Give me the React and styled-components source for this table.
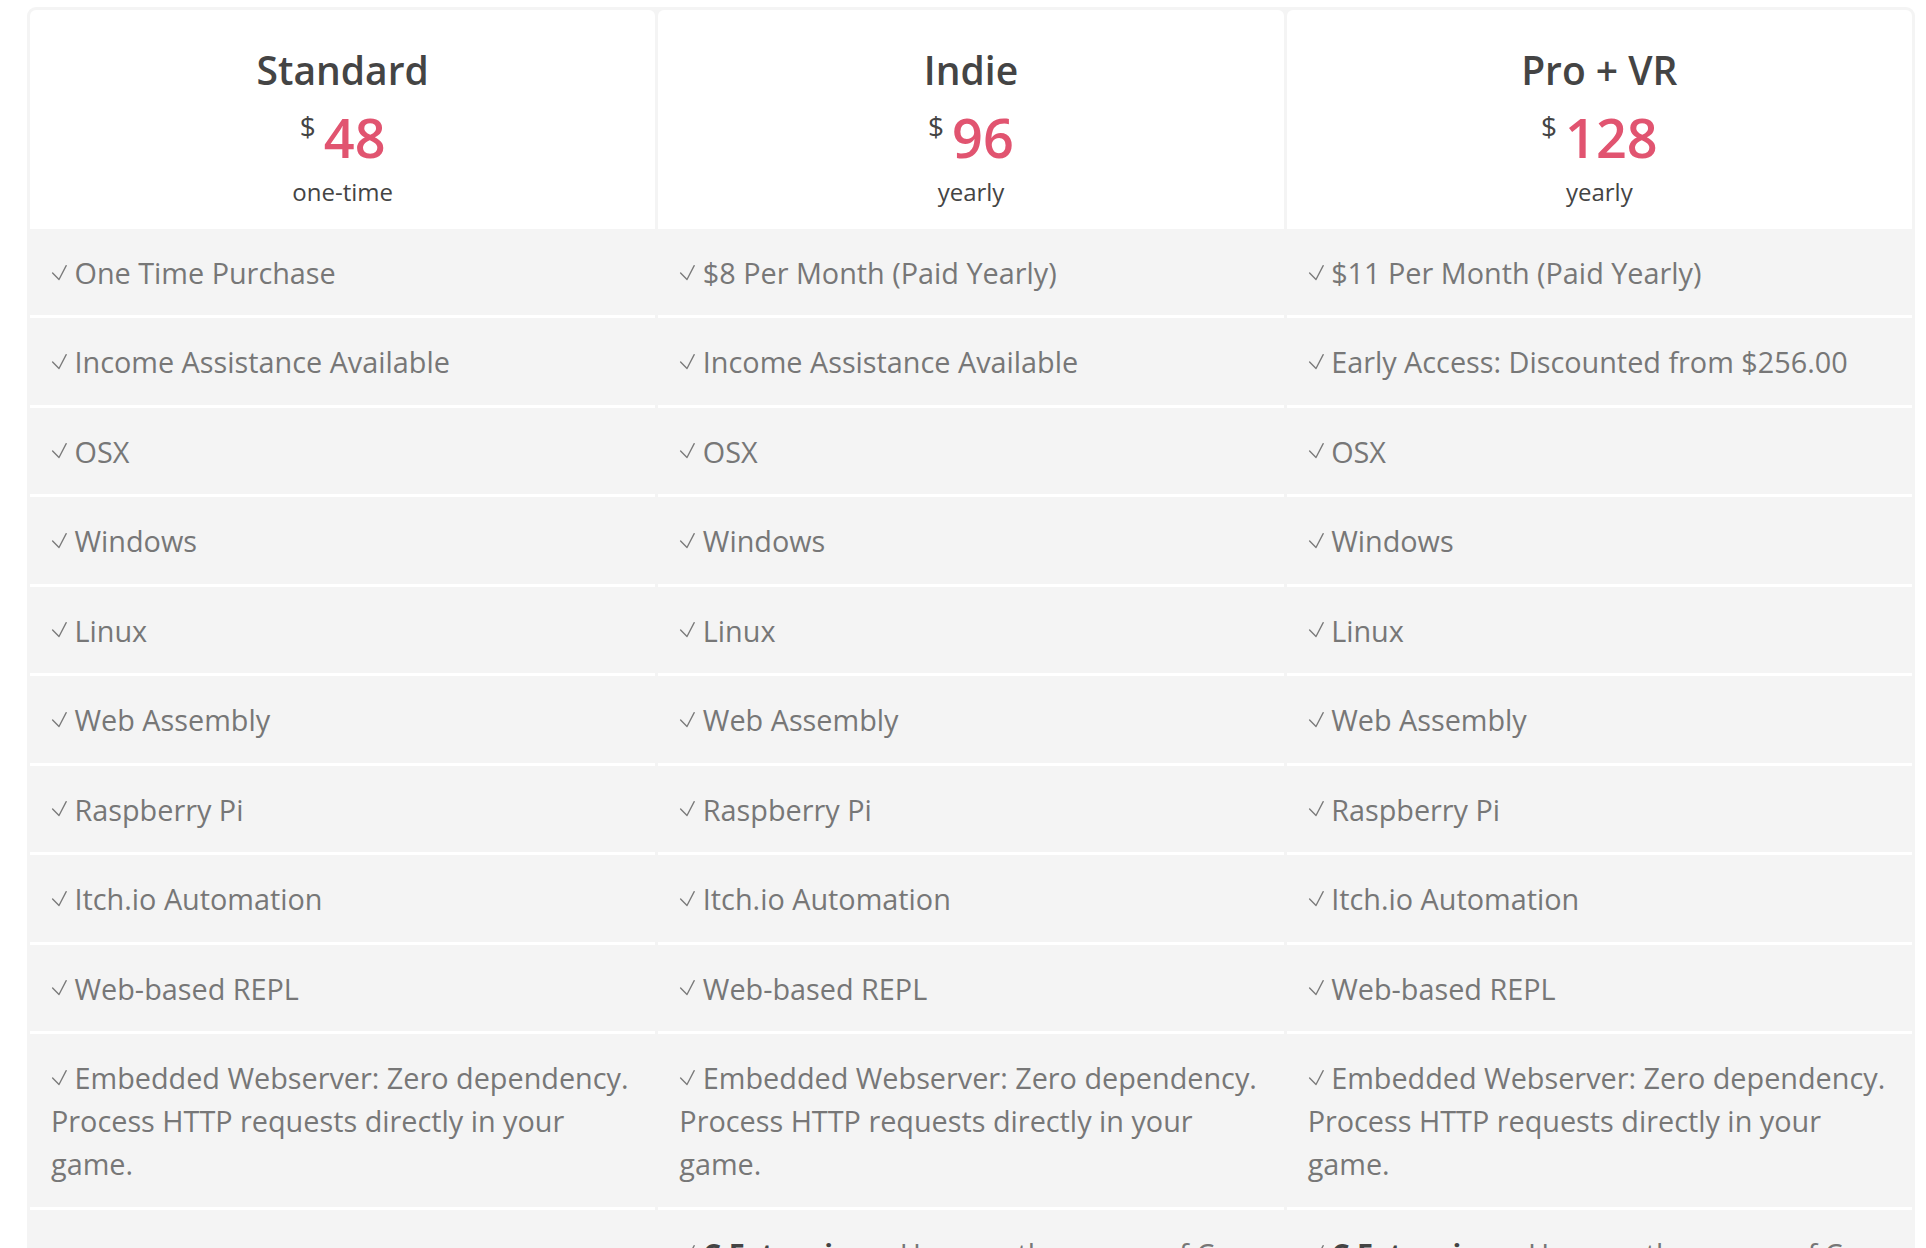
import React from 'react';
import styled, { createGlobalStyle } from 'styled-components';

const GlobalStyle = createGlobalStyle`
  body {
    margin: 0;
    background: #fff;
    font-family: "Open Sans", "Liberation Sans", sans-serif;
  }
`;

const Wrapper = styled.div`
  padding: 7px 11px 0 27px;
`;

const Table = styled.div`
  display: grid;
  grid-template-columns: repeat(3, minmax(0, 1fr));
  gap: 3px;
  padding: 3px;
  width: 1888px;
  box-sizing: border-box;
  background: #f4f4f4;
  border-radius: 9px;
`;

const HeaderCell = styled.div`
  background: #fff;
  border-radius: 6px 6px 0 0;
  padding: 36px 10px 21px;
  text-align: center;
  color: #444;
`;

const Title = styled.div`
  font-size: 39px;
  font-weight: 600;
  line-height: 48px;
`;

const PriceRow = styled.div`
  display: flex;
  justify-content: center;
  align-items: flex-start;
  margin-top: 10.5px;
  height: 64px;
`;

const Currency = styled.span`
  font-size: 28px;
  line-height: 28px;
  margin-top: 7.5px;
  margin-right: 8px;
`;

const Amount = styled.span`
  font-size: 54px;
  line-height: 64px;
  font-weight: 600;
  color: #e15470;
`;

const Period = styled.div`
  font-size: 24px;
  line-height: 32px;
  margin-top: 7.5px;
`;

const FeatureCell = styled.div`
  background: #f4f4f4;
  border-bottom: 3px solid #fff;
  padding: 19px 20px 21.25px 21px;
  font-size: 28.8px;
  line-height: 43.2px;
  color: #777;
`;

const CheckIcon = styled.svg`
  width: 16px;
  height: 15px;
  vertical-align: 4.5px;
  overflow: visible;
`;

const Strong = styled.strong`
  font-weight: 700;
  color: #444;
`;

const Check = () => (
  <CheckIcon viewBox="0 0 16 15" aria-hidden="true">
    <polyline
      points="1.6,8 8,14.5 15.2,0.6"
      fill="none"
      stroke="#7a7a7a"
      strokeWidth="1.35"
      strokeLinecap="round"
      strokeLinejoin="round"
    />
  </CheckIcon>
);

const plans = [
  { name: 'Standard', price: 48, period: 'one-time' },
  { name: 'Indie', price: 96, period: 'yearly' },
  { name: 'Pro + VR', price: 128, period: 'yearly' },
];

const embedded = 'Embedded Webserver: Zero dependency. Process HTTP requests directly in your game.';
const cExt = (
  <>
    <Strong>C Extensions:</Strong> Harness the power of C libraries and native code directly from your game.
  </>
);

const rows = [
  ['One Time Purchase', '$8 Per Month (Paid Yearly)', '$11 Per Month (Paid Yearly)'],
  ['Income Assistance Available', 'Income Assistance Available', 'Early Access: Discounted from $256.00'],
  ['OSX', 'OSX', 'OSX'],
  ['Windows', 'Windows', 'Windows'],
  ['Linux', 'Linux', 'Linux'],
  ['Web Assembly', 'Web Assembly', 'Web Assembly'],
  ['Raspberry Pi', 'Raspberry Pi', 'Raspberry Pi'],
  ['Itch.io Automation', 'Itch.io Automation', 'Itch.io Automation'],
  ['Web-based REPL', 'Web-based REPL', 'Web-based REPL'],
  [embedded, embedded, embedded],
  [null, cExt, cExt],
];

const Feature = ({ children }) => (
  <FeatureCell>
    {children && (
      <>
        <Check /> {children}
      </>
    )}
  </FeatureCell>
);

export default function App() {
  return (
    <Wrapper>
      <GlobalStyle />
      <Table>
        {plans.map((p) => (
          <HeaderCell key={p.name}>
            <Title>{p.name}</Title>
            <PriceRow>
              <Currency>$</Currency>
              <Amount>{p.price}</Amount>
            </PriceRow>
            <Period>{p.period}</Period>
          </HeaderCell>
        ))}
        {rows.map((row, i) =>
          row.map((text, j) => <Feature key={`${i}-${j}`}>{text}</Feature>)
        )}
      </Table>
    </Wrapper>
  );
}
